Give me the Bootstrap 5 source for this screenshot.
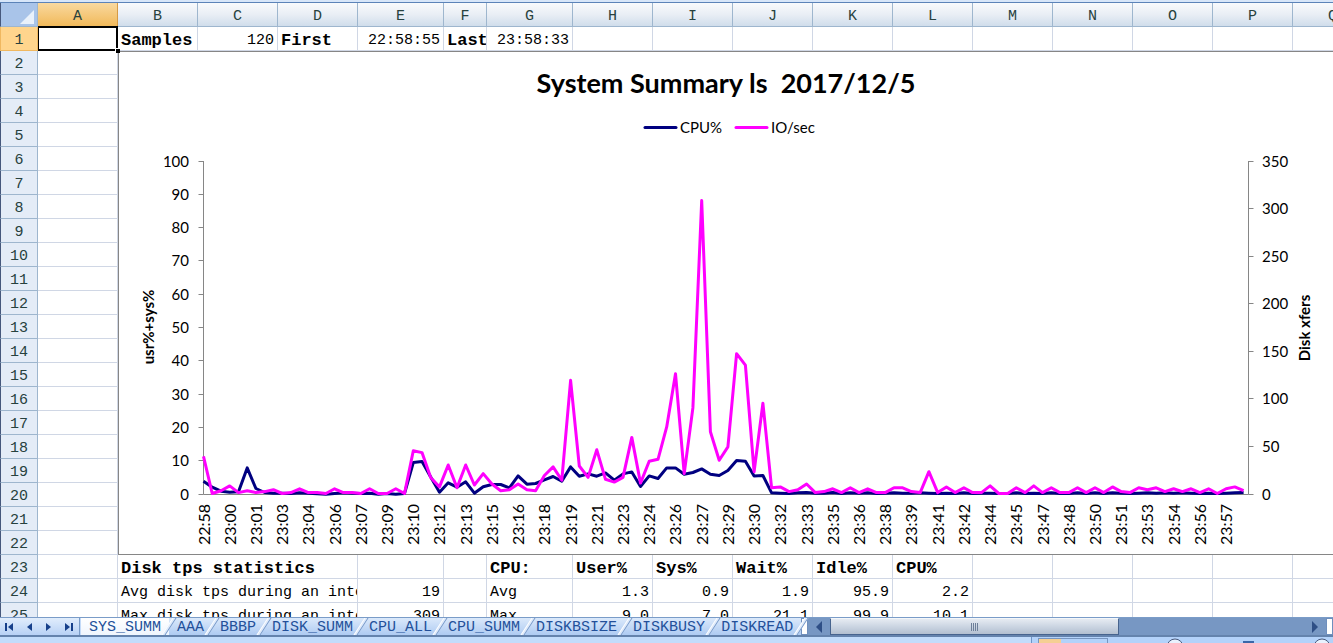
<!DOCTYPE html>
<html lang="en">
<head>
<meta charset="utf-8">
<meta name="viewport" content="width=device-width, initial-scale=1">
<title>SYS_SUMM</title>
<link href="https://cdn.jsdelivr.net/npm/bootstrap@5.3.0/dist/css/bootstrap.min.css" rel="stylesheet">
<style>
  body { font-family: "Liberation Mono", monospace; font-size: 15px; line-height: 19px; color: #000; }
  .topstrip { height: 3px; background: #d7e6f9; border-bottom: 1px solid #5b83b8; }
  .sheetarea { min-height: 0; }

  .sheet { table-layout: fixed; border-collapse: separate; border-spacing: 0; width: 1373px; }
  .sheet tr { height: 24px; }
  .sheet th, .sheet td { height: 24px; padding: 4px 3px 0; border-right: 1px solid #d0d7e5; border-bottom: 1px solid #d0d7e5; white-space: nowrap; overflow: hidden; }
  .sheet thead th { font-weight: 400; color: #27413e; text-align: center; background: linear-gradient(#f8fafc, #e9eef5 50%, #d0ddeb); border-color: #9eb6ce; }
  .sheet tbody th[scope=row] { font-weight: 400; color: #27413e; text-align: center; background: #e4ecf7; border-color: #9eb6ce; border-left: 1px solid #46587c; }
  .sheet thead th.picked { background: linear-gradient(#f9d99f, #f1b95a); border-color: #d59a45; }
  .sheet tbody th.picked { background: #ffd58d; border-color: #f0b860; }
  .sheet thead th.corner { background: #a9c4e9; border-left: 1px solid #46587c; padding: 0; }
  .corner svg { display: block; margin: 4px 3px 0 auto; }
  .sheet td.num { text-align: right; }
  .sheet td.head { font-weight: 700; font-size: 17px; }
  .sheet td.cursor { position: relative; overflow: visible; box-shadow: 0 -1px 0 #000, inset 0 0 0 1px #000; border-color: #000; }
  .cursor::after { content: ""; position: absolute; right: -3px; bottom: -3px; width: 5px; height: 5px; background: #000; border: 1px solid #fff; border-width: 1px 0 0 1px; }
  .sheet td.chartcell { padding: 0; border: 0; vertical-align: top; }
  .chart { display: block; font-family: Lato, sans-serif; font-size: 15px; }
  .chart .title { font-size: 27px; font-weight: 700; white-space: pre; }
  .chart .axisname { font-size: 15px; font-weight: 700; }
  .chart .time { font-size: 16px; }
  .chart .line { fill: none; stroke-width: 3; stroke-linejoin: round; }

  .tabbar { height: 20px; background: #c3daf8; border-top: 1px solid #7a9cc8; border-bottom: 2px solid #6483ad; }
  .tabnav { width: 80px; border-right: 1px solid #7a9cc8; background: linear-gradient(#e1edfc, #b7d1f5); }
  .tabbar button { border: 0; background: none; padding: 0; line-height: 16px; }
  .tabnav button { display: flex; align-items: center; justify-content: center; width: 18px; }
  .sheettab { position: relative; padding: 2px 8px 0 !important; color: #23509a; background: linear-gradient(#dbe9fb, #aecbf2) !important; }
  .sheettab.active { background: linear-gradient(#fff, #eff5fd) !important; margin-left: 1px; }
  .sheettab::after { content: ""; position: absolute; z-index: 1; right: -2px; top: 0; bottom: 0; width: 4px; border-left: 1px solid #fff; border-right: 1px solid #6f94c7; background: #dfeafa; transform: skewX(-33deg); }
  .splitter { width: 7px; background: #fff; border: 1px solid #6f8fbd; }
  .scroller { background: #7797c3; min-width: 0; }
  .scroller .arrow { width: 22px; display: flex; align-items: center; justify-content: center; }
  .scroller .thumb { width: 61%; display: flex; align-items: center; justify-content: center; background: linear-gradient(#e6ebf2, #cbd5e2 50%, #b2bfd0); border: 1px solid #47648e; border-top-color: #f4f7fa; }
  .statusbar { height: 6px; background: #c2dcfb; overflow: hidden; }
  .statustools { width: 302px; border-left: 1px solid #6f94c7; background: #b3d2fa; }
  .views { width: 70px; height: 6px; margin: 1px 0 0 6px; border: 1px solid #7796c0; border-bottom: 0; }
  .views span { width: 22px; background: #f5cf94; }
</style>
</head>
<body class="vh-100 overflow-hidden d-flex flex-column bg-white">
<div class="topstrip flex-shrink-0"></div>

<main class="sheetarea flex-grow-1 overflow-hidden">
<table class="sheet" id="sheet">
  <colgroup>
    <col style="width:38px"><col style="width:80px"><col style="width:80px"><col style="width:80px"><col style="width:80px">
    <col style="width:86px"><col style="width:43px"><col style="width:86px">
    <col span="10" style="width:80px">
  </colgroup>
  <thead>
    <tr>
      <th class="corner" aria-label="Select all"><svg width="14" height="14"><path d="M14 0V14H0Z" fill="#e9f1fb"/></svg></th>
      <th class="picked">A</th><th>B</th><th>C</th><th>D</th><th>E</th><th>F</th><th>G</th><th>H</th><th>I</th><th>J</th><th>K</th><th>L</th><th>M</th><th>N</th><th>O</th><th>P</th><th>Q</th>
    </tr>
  </thead>
  <tbody>
    <tr><th scope="row" class="picked">1</th><td class="cursor"></td><td class="head">Samples</td><td class="num">120</td><td class="head">First</td><td class="num">22:58:55</td><td class="head">Last</td><td class="num">23:58:33</td><td></td><td></td><td></td><td></td><td></td><td></td><td></td><td></td><td></td><td></td></tr>
    <tr><th scope="row">2</th><td></td>
      <td class="chartcell" colspan="16" rowspan="21">
        <svg class="chart" id="chart" width="1216" height="504" viewBox="118 51 1216 504" role="img" aria-label="System Summary">
          <path d="M1334 51.5H118M118 554.5H1334" fill="none" stroke="#868686"/>
          <path d="M118.5 51V555" fill="none" stroke="#868686"/>
          <text class="title" x="726" y="93" text-anchor="middle">System Summary ls  2017/12/5</text>
          <path d="M645 127.500H676" stroke="#000080" stroke-width="3" stroke-linecap="round"/>
          <text x="680" y="133">CPU%</text>
          <path d="M736 127.500H767" stroke="#f0f" stroke-width="3" stroke-linecap="round"/>
          <text x="771" y="133">IO/sec</text>
          <text class="axisname" transform="translate(154 327) rotate(-90)" text-anchor="middle">usr%+sys%</text>
          <text class="axisname" transform="translate(1310 328) rotate(-90)" text-anchor="middle">Disk xfers</text>
        </svg>
      </td></tr>
    <tr><th scope="row">3</th><td></td></tr>
    <tr><th scope="row">4</th><td></td></tr>
    <tr><th scope="row">5</th><td></td></tr>
    <tr><th scope="row">6</th><td></td></tr>
    <tr><th scope="row">7</th><td></td></tr>
    <tr><th scope="row">8</th><td></td></tr>
    <tr><th scope="row">9</th><td></td></tr>
    <tr><th scope="row">10</th><td></td></tr>
    <tr><th scope="row">11</th><td></td></tr>
    <tr><th scope="row">12</th><td></td></tr>
    <tr><th scope="row">13</th><td></td></tr>
    <tr><th scope="row">14</th><td></td></tr>
    <tr><th scope="row">15</th><td></td></tr>
    <tr><th scope="row">16</th><td></td></tr>
    <tr><th scope="row">17</th><td></td></tr>
    <tr><th scope="row">18</th><td></td></tr>
    <tr><th scope="row">19</th><td></td></tr>
    <tr><th scope="row">20</th><td></td></tr>
    <tr><th scope="row">21</th><td></td></tr>
    <tr><th scope="row">22</th><td></td></tr>
    <tr><th scope="row">23</th><td></td><td class="head" colspan="3">Disk tps statistics</td><td></td><td></td><td class="head">CPU:</td><td class="head">User%</td><td class="head">Sys%</td><td class="head">Wait%</td><td class="head">Idle%</td><td class="head">CPU%</td><td></td><td></td><td></td><td></td><td></td></tr>
    <tr><th scope="row">24</th><td></td><td colspan="3">Avg disk tps during an interval:</td><td class="num">19</td><td></td><td>Avg</td><td class="num">1.3</td><td class="num">0.9</td><td class="num">1.9</td><td class="num">95.9</td><td class="num">2.2</td><td></td><td></td><td></td><td></td><td></td></tr>
    <tr><th scope="row">25</th><td></td><td colspan="3">Max disk tps during an interval:</td><td class="num">309</td><td></td><td>Max</td><td class="num">9.0</td><td class="num">7.0</td><td class="num">21.1</td><td class="num">99.9</td><td class="num">10.1</td><td></td><td></td><td></td><td></td><td></td></tr>
  </tbody>
</table>
</main>

<nav class="tabbar d-flex flex-shrink-0">
  <div class="tabnav d-flex flex-shrink-0 justify-content-around">
    <button type="button" aria-label="First sheet"><svg width="9" height="8" fill="#17408b"><path d="M0 0H2V8H0ZM8 0V8L3 4Z"/></svg></button>
    <button type="button" aria-label="Previous sheet"><svg width="6" height="8" fill="#17408b"><path d="M5 0V8L0 4Z"/></svg></button>
    <button type="button" aria-label="Next sheet"><svg width="6" height="8" fill="#17408b"><path d="M0 0V8L5 4Z"/></svg></button>
    <button type="button" aria-label="Last sheet"><svg width="9" height="8" fill="#17408b"><path d="M6 0H8V8H6ZM0 0V8L5 4Z"/></svg></button>
  </div>
  <button type="button" class="sheettab active">SYS_SUMM</button>
  <button type="button" class="sheettab">AAA</button>
  <button type="button" class="sheettab">BBBP</button>
  <button type="button" class="sheettab">DISK_SUMM</button>
  <button type="button" class="sheettab">CPU_ALL</button>
  <button type="button" class="sheettab">CPU_SUMM</button>
  <button type="button" class="sheettab">DISKBSIZE</button>
  <button type="button" class="sheettab">DISKBUSY</button>
  <button type="button" class="sheettab">DISKREAD</button>
  <div class="splitter flex-shrink-0"></div>
  <div class="scroller d-flex flex-grow-1">
    <button type="button" class="arrow flex-shrink-0" aria-label="Scroll left"><svg width="6" height="12"><path d="M6 0V12L0 6Z" fill="#2f4f86"/></svg></button>
    <div class="flex-grow-1 d-flex">
      <div class="thumb"><svg width="8" height="8"><path d="M.5 0V8M2.5 0V8M4.500 0V8M6.500 0V8" stroke="#6d7f99"/></svg></div>
    </div>
    <button type="button" class="arrow flex-shrink-0" aria-label="Scroll right"><svg width="6" height="12"><path d="M0 0V12L6 6Z" fill="#2f4f86"/></svg></button>
  </div>
  <div class="splitter flex-shrink-0"></div>
</nav>

<footer class="statusbar d-flex flex-shrink-0 justify-content-end">
  <div class="statustools d-flex">
    <div class="views d-flex flex-shrink-0"><span></span></div>
    <svg width="224" height="6" fill="none"><circle cx="67" cy="10" r="8" fill="#e8f1fd" stroke="#46587c"/><path d="M135 5H146" stroke="#3a66a8" stroke-width="2"/><circle cx="214" cy="10" r="8" fill="#e8f1fd" stroke="#46587c"/></svg>
  </div>
</footer>

<script src="https://cdn.jsdelivr.net/npm/bootstrap@5.3.0/dist/js/bootstrap.bundle.min.js"></script>
<script>
  // One sample every 30 seconds: CPU in percent, IO in transfers per second.
  const cpu = [4,2.2,1,.7,.8,8,1.8,.6,.4,.4,.3,.5,.4,.2,.1,.3,.5,.4,.3,.4,.1,.3,.1,.3,9.6,9.9,5.3,.7,3.5,2.2,3.8,.4,2.3,3,3,2,5.6,3.1,3.3,4.4,5.4,4,8.3,5.5,6.2,5.5,6.5,4.3,6.2,6.8,2.4,5.6,4.8,8,8,6.1,6.6,7.7,6.1,5.7,7.2,10.2,10,5.6,5.7,.5,.4,.3,.5,.6,.4,.4,.6,.3,.5,.4,.5,.3,.4,.5,.4,.4,.5,.4,.3,.4,.3,.5,.3,.4,.4,.3,.3,.5,.3,.4,.3,.5,.3,.3,.5,.3,.5,.3,.5,.4,.3,.4,.5,.4,.5,.4,.5,.4,.3,.4,.3,.4,.5,.6];
  const io = [40,1,4,9,2,4,2,3,5,1,2,6,2,2,1,6,2,2,1,6,1,1,6,1,46,44,18,8,31,7,31,10,22,11,4,5,11,5,4,20,29,15,120,30,18,47,16,13,18,60,12,35,37,71,127,22,91,309,66,36,50,148,136,24,96,7,8,3,5,11,2,3,6,2,7,2,6,2,2,7,7,3,2,24,2,8,2,7,2,2,9,1,1,7,2,9,2,7,2,2,7,2,7,2,8,3,2,7,5,7,3,6,3,6,2,6,1,6,8,4];
  const times = "22:58 23:00 23:01 23:03 23:04 23:06 23:07 23:09 23:10 23:12 23:13 23:15 23:16 23:18 23:19 23:21 23:23 23:24 23:26 23:27 23:29 23:30 23:32 23:33 23:35 23:36 23:38 23:39 23:41 23:42 23:44 23:45 23:47 23:48 23:50 23:51 23:53 23:54 23:56 23:57".split(" ");
  const left = 203.5, right = 1248.5, base = 494.5, height = 333, step = 8.74;
  const points = (data, max) => data.map((v, i) => (left + i * step).toFixed(1) + "," + (base - v / max * height).toFixed(1)).join(" ");
  let axes = `M${left} 161V${base}H${right}V161`, out = "";
  for (let v = 0; v <= 100; v += 10) {
    const y = Math.round(base - v / 100 * height) - .5;
    axes += `M${left - 5} ${y}H${left}`;
    out += `<text x="189" y="${y + 5.5}" text-anchor="end">${v}</text>`;
  }
  for (let v = 0; v <= 350; v += 50) {
    const y = Math.round(base - v / 350 * height) - .5;
    axes += `M${right} ${y}h5`;
    out += `<text x="1262" y="${y + 5.5}">${v}</text>`;
  }
  times.forEach((t, i) => {
    out += `<text class="time" transform="translate(${Math.round(left + i * 3 * step) + 6} 545) rotate(-90)">${t}</text>`;
  });
  out += `<path d="${axes}" fill="none" stroke="#868686"/>`
       + `<polyline class="line" stroke="#000080" points="${points(cpu, 100)}"/>`
       + `<polyline class="line" stroke="#ff00ff" points="${points(io, 350)}"/>`;
  document.getElementById("chart").insertAdjacentHTML("beforeend", out);
</script>
</body>
</html>
